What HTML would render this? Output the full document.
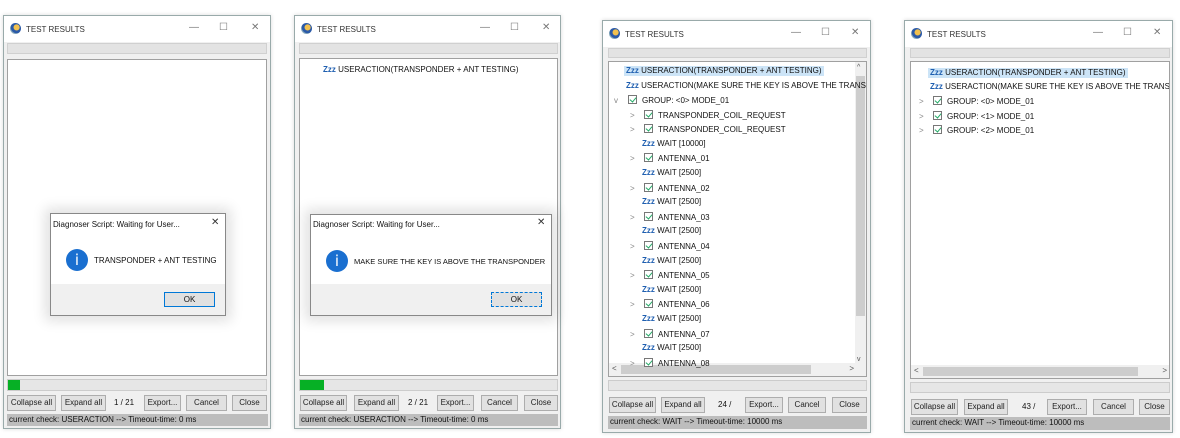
<!DOCTYPE html>
<html><head><meta charset="utf-8"><style>
*{margin:0;padding:0;box-sizing:border-box}
body{width:1180px;height:438px;background:#fff;position:relative;overflow:hidden;font-family:"Liberation Sans",sans-serif;font-size:8px;color:#111}
.a{position:absolute;white-space:nowrap}
.win{position:absolute;background:#f0f0f0;border:1px solid #9aa;box-shadow:0 0 4px rgba(0,0,0,.15)}
.tb{position:absolute;left:0;right:0;top:0;height:26px;background:#fff}
.ttl{position:absolute;left:22px;top:9px;font-size:8px;color:#333}
.ico{position:absolute;left:6px;top:7px;width:11px;height:11px;border-radius:50%;background:radial-gradient(circle at 60% 40%,#f2c14e 0 30%,#2b5aa8 35% 60%,#8ab 65%)}
.ctl{position:absolute;top:6px;font-size:10px;color:#777}
.strip{background:#e3e3e3;border:1px solid #d0d0d0}
.tree{background:#fff;border:1px solid #a0a0a0}
.prog{background:#e6e6e6;border:1px solid #ccc}
.btn{position:absolute;height:16px;background:#e1e1e1;border:1px solid #adadad;font-size:8px;line-height:14px;text-align:center;color:#222;white-space:nowrap}
.stat{background:#bdbdbd;font-size:8px;line-height:12px;padding-left:2px;color:#111}
.row{position:absolute;white-space:nowrap;font-size:8px;line-height:10px}
.z{color:#1f5fb0;font-weight:bold;font-size:8px}
.cb{display:inline-block;width:9px;height:9px;border:1px solid #777;vertical-align:-1px;position:relative;margin-right:5px;background:#fff}
.cb:after{content:"";position:absolute;left:2px;top:0px;width:3px;height:5px;border:solid #2a6;border-width:0 1.3px 1.3px 0;transform:rotate(40deg)}
.car{color:#888;display:inline-block;width:14px}
.dlg{position:absolute;background:#fff;border:1px solid #888;box-shadow:0 0 12px 5px rgba(0,0,0,.12)}
.dft{position:absolute;left:0;right:0;bottom:0;height:31px;background:#f0f0f0}
.info{position:absolute;width:22px;height:22px;border-radius:50%;background:#1a6fd0;color:#fff;text-align:center;font-size:15px;line-height:22px;font-family:"DejaVu Sans",sans-serif}
.ok{position:absolute;height:15px;background:#e1e1e1;border:1px solid #0078d7;text-align:center;line-height:13px;font-size:8px}
</style></head><body>

<!-- Window 1 -->
<div class="win" style="left:3px;top:15px;width:268px;height:414px">
 <div class="tb"><div class="ico"></div><div class="ttl">TEST RESULTS</div>
 <div class="ctl" style="left:185px">—</div><div class="ctl" style="left:215px">☐</div><div class="ctl" style="left:247px">✕</div></div>
 <div class="a strip" style="left:3px;top:27px;width:260px;height:11px"></div>
 <div class="a tree" style="left:3px;top:43px;width:260px;height:317px"></div>
 <div class="a prog" style="left:3px;top:363px;width:260px;height:12px"><div style="width:12px;height:10px;background:#06b025"></div></div>
 <div class="btn" style="left:3px;top:379px;width:49px">Collapse all</div>
 <div class="btn" style="left:57px;top:379px;width:45px">Expand all</div>
 <div class="a" style="left:110px;top:382px">1 / 21</div>
 <div class="btn" style="left:140px;top:379px;width:37px">Export...</div>
 <div class="btn" style="left:182px;top:379px;width:41px">Cancel</div>
 <div class="btn" style="left:228px;top:379px;width:35px">Close</div>
 <div class="a stat" style="left:3px;top:398px;width:261px;height:12px">current check: USERACTION --&gt; Timeout-time: 0 ms</div>
</div>
<div class="dlg" style="left:50px;top:213px;width:176px;height:103px">
 <div class="a" style="left:2px;top:6px">Diagnoser Script: Waiting for User...</div>
 <div class="a" style="left:160px;top:3px;font-size:10px;color:#333">✕</div>
 <div class="info" style="left:15px;top:35px">i</div>
 <div class="a" style="left:43px;top:42px">TRANSPONDER + ANT TESTING</div>
 <div class="dft"><div class="ok" style="left:113px;top:8px;width:51px">OK</div></div>
</div>

<!-- Window 2 -->
<div class="win" style="left:294px;top:15px;width:267px;height:414px">
 <div class="tb"><div class="ico"></div><div class="ttl">TEST RESULTS</div>
 <div class="ctl" style="left:185px">—</div><div class="ctl" style="left:215px">☐</div><div class="ctl" style="left:247px">✕</div></div>
 <div class="a strip" style="left:4px;top:27px;width:259px;height:11px"></div>
 <div class="a tree" style="left:4px;top:42px;width:259px;height:318px">
  <div class="row" style="left:23px;top:6px"><span class="z">Zzz</span> USERACTION(TRANSPONDER + ANT TESTING)</div></div>
 <div class="a prog" style="left:4px;top:363px;width:259px;height:12px"><div style="width:24px;height:10px;background:#06b025"></div></div>
 <div class="btn" style="left:5px;top:379px;width:47px">Collapse all</div>
 <div class="btn" style="left:59px;top:379px;width:45px">Expand all</div>
 <div class="a" style="left:113px;top:382px">2 / 21</div>
 <div class="btn" style="left:142px;top:379px;width:37px">Export...</div>
 <div class="btn" style="left:186px;top:379px;width:37px">Cancel</div>
 <div class="btn" style="left:229px;top:379px;width:34px">Close</div>
 <div class="a stat" style="left:4px;top:398px;width:259px;height:12px">current check: USERACTION --&gt; Timeout-time: 0 ms</div>
</div>
<div class="dlg" style="left:310px;top:214px;width:242px;height:102px">
 <div class="a" style="left:2px;top:5px">Diagnoser Script: Waiting for User...</div>
 <div class="a" style="left:226px;top:2px;font-size:10px;color:#333">✕</div>
 <div class="info" style="left:15px;top:35px">i</div>
 <div class="a" style="left:43px;top:42px;font-size:7.5px">MAKE SURE THE KEY IS ABOVE THE TRANSPONDER</div>
 <div class="dft"><div class="ok" style="left:180px;top:8px;width:51px;border-style:dashed">OK</div></div>
</div>

<!-- Window 3 -->
<div class="win" style="left:602px;top:20px;width:269px;height:413px">
 <div class="tb"><div class="ico"></div><div class="ttl">TEST RESULTS</div>
 <div class="ctl" style="left:188px">—</div><div class="ctl" style="left:218px">☐</div><div class="ctl" style="left:248px">✕</div></div>
 <div class="a strip" style="left:5px;top:27px;width:259px;height:10px"></div>
 <div class="a tree" style="left:5px;top:40px;width:259px;height:316px;overflow:hidden">
  <div class="a" style="right:0;top:0;width:11px;height:303px;background:#f0f0f0"><div style="position:absolute;left:1px;top:14px;width:9px;height:240px;background:#cdcdcd"></div><div style="position:absolute;left:2px;top:2px;font-size:7px;color:#555">^</div><div style="position:absolute;left:2px;bottom:2px;font-size:7px;color:#555">v</div></div>
  <div class="a" style="left:0;bottom:0;width:259px;height:13px;background:#f0f0f0"><div style="position:absolute;left:12px;top:2px;width:190px;height:9px;background:#cdcdcd"></div><div style="position:absolute;left:3px;top:1px;color:#555">&lt;</div><div style="position:absolute;right:14px;top:1px;color:#555">&gt;</div></div>
  <div class="row" style="left:15px;top:4px;background:#cce4f7;padding:0 2px"><span class="z">Zzz</span> USERACTION(TRANSPONDER + ANT TESTING)</div>
  <div class="row" style="left:17px;top:19px"><span class="z">Zzz</span> USERACTION(MAKE SURE THE KEY IS ABOVE THE TRANSF</div>
  <div class="row" style="left:5px;top:33px"><span class="car">v</span><span class="cb"></span>GROUP: &lt;0&gt; MODE_01</div>
  <div class="row" style="left:21px;top:48px"><span class="car">&gt;</span><span class="cb"></span>TRANSPONDER_COIL_REQUEST</div>
  <div class="row" style="left:21px;top:62px"><span class="car">&gt;</span><span class="cb"></span>TRANSPONDER_COIL_REQUEST</div>
  <div class="row" style="left:33px;top:77px"><span class="z">Zzz</span> WAIT [10000]</div>
  <div class="row" style="left:21px;top:91px"><span class="car">&gt;</span><span class="cb"></span>ANTENNA_01</div>
  <div class="row" style="left:33px;top:106px"><span class="z">Zzz</span> WAIT [2500]</div>
  <div class="row" style="left:21px;top:121px"><span class="car">&gt;</span><span class="cb"></span>ANTENNA_02</div>
  <div class="row" style="left:33px;top:135px"><span class="z">Zzz</span> WAIT [2500]</div>
  <div class="row" style="left:21px;top:150px"><span class="car">&gt;</span><span class="cb"></span>ANTENNA_03</div>
  <div class="row" style="left:33px;top:164px"><span class="z">Zzz</span> WAIT [2500]</div>
  <div class="row" style="left:21px;top:179px"><span class="car">&gt;</span><span class="cb"></span>ANTENNA_04</div>
  <div class="row" style="left:33px;top:194px"><span class="z">Zzz</span> WAIT [2500]</div>
  <div class="row" style="left:21px;top:208px"><span class="car">&gt;</span><span class="cb"></span>ANTENNA_05</div>
  <div class="row" style="left:33px;top:223px"><span class="z">Zzz</span> WAIT [2500]</div>
  <div class="row" style="left:21px;top:237px"><span class="car">&gt;</span><span class="cb"></span>ANTENNA_06</div>
  <div class="row" style="left:33px;top:252px"><span class="z">Zzz</span> WAIT [2500]</div>
  <div class="row" style="left:21px;top:267px"><span class="car">&gt;</span><span class="cb"></span>ANTENNA_07</div>
  <div class="row" style="left:33px;top:281px"><span class="z">Zzz</span> WAIT [2500]</div>
  <div class="row" style="left:21px;top:296px"><span class="car">&gt;</span><span class="cb"></span>ANTENNA_08</div>
 </div>
 <div class="a prog" style="left:5px;top:359px;width:259px;height:11px"></div>
 <div class="btn" style="left:6px;top:376px;width:47px">Collapse all</div>
 <div class="btn" style="left:58px;top:376px;width:44px">Expand all</div>
 <div class="a" style="left:115px;top:379px">24 /</div>
 <div class="btn" style="left:142px;top:376px;width:38px">Export...</div>
 <div class="btn" style="left:185px;top:376px;width:38px">Cancel</div>
 <div class="btn" style="left:229px;top:376px;width:35px">Close</div>
 <div class="a stat" style="left:5px;top:395px;width:259px;height:13px">current check: WAIT --&gt; Timeout-time: 10000 ms</div>
</div>

<!-- Window 4 -->
<div class="win" style="left:904px;top:20px;width:269px;height:413px">
 <div class="tb"><div class="ico"></div><div class="ttl">TEST RESULTS</div>
 <div class="ctl" style="left:188px">—</div><div class="ctl" style="left:218px">☐</div><div class="ctl" style="left:248px">✕</div></div>
 <div class="a strip" style="left:5px;top:27px;width:260px;height:10px"></div>
 <div class="a tree" style="left:5px;top:40px;width:260px;height:318px;overflow:hidden">
  <div class="a" style="left:0;bottom:0;width:260px;height:13px;background:#f0f0f0"><div style="position:absolute;left:12px;top:2px;width:215px;height:9px;background:#cdcdcd"></div><div style="position:absolute;left:3px;top:1px;color:#555">&lt;</div><div style="position:absolute;right:4px;top:1px;color:#555">&gt;</div></div>
  <div class="row" style="left:17px;top:6px;background:#cce4f7;padding:0 2px"><span class="z">Zzz</span> USERACTION(TRANSPONDER + ANT TESTING)</div>
  <div class="row" style="left:19px;top:20px"><span class="z">Zzz</span> USERACTION(MAKE SURE THE KEY IS ABOVE THE TRANSPON</div>
  <div class="row" style="left:8px;top:34px"><span class="car">&gt;</span><span class="cb"></span>GROUP: &lt;0&gt; MODE_01</div>
  <div class="row" style="left:8px;top:49px"><span class="car">&gt;</span><span class="cb"></span>GROUP: &lt;1&gt; MODE_01</div>
  <div class="row" style="left:8px;top:63px"><span class="car">&gt;</span><span class="cb"></span>GROUP: &lt;2&gt; MODE_01</div>
 </div>
 <div class="a prog" style="left:5px;top:361px;width:260px;height:11px"></div>
 <div class="btn" style="left:6px;top:378px;width:47px">Collapse all</div>
 <div class="btn" style="left:59px;top:378px;width:44px">Expand all</div>
 <div class="a" style="left:117px;top:381px">43 /</div>
 <div class="btn" style="left:142px;top:378px;width:40px">Export...</div>
 <div class="btn" style="left:188px;top:378px;width:41px">Cancel</div>
 <div class="btn" style="left:234px;top:378px;width:31px">Close</div>
 <div class="a stat" style="left:5px;top:396px;width:260px;height:13px">current check: WAIT --&gt; Timeout-time: 10000 ms</div>
</div>
</body></html>
